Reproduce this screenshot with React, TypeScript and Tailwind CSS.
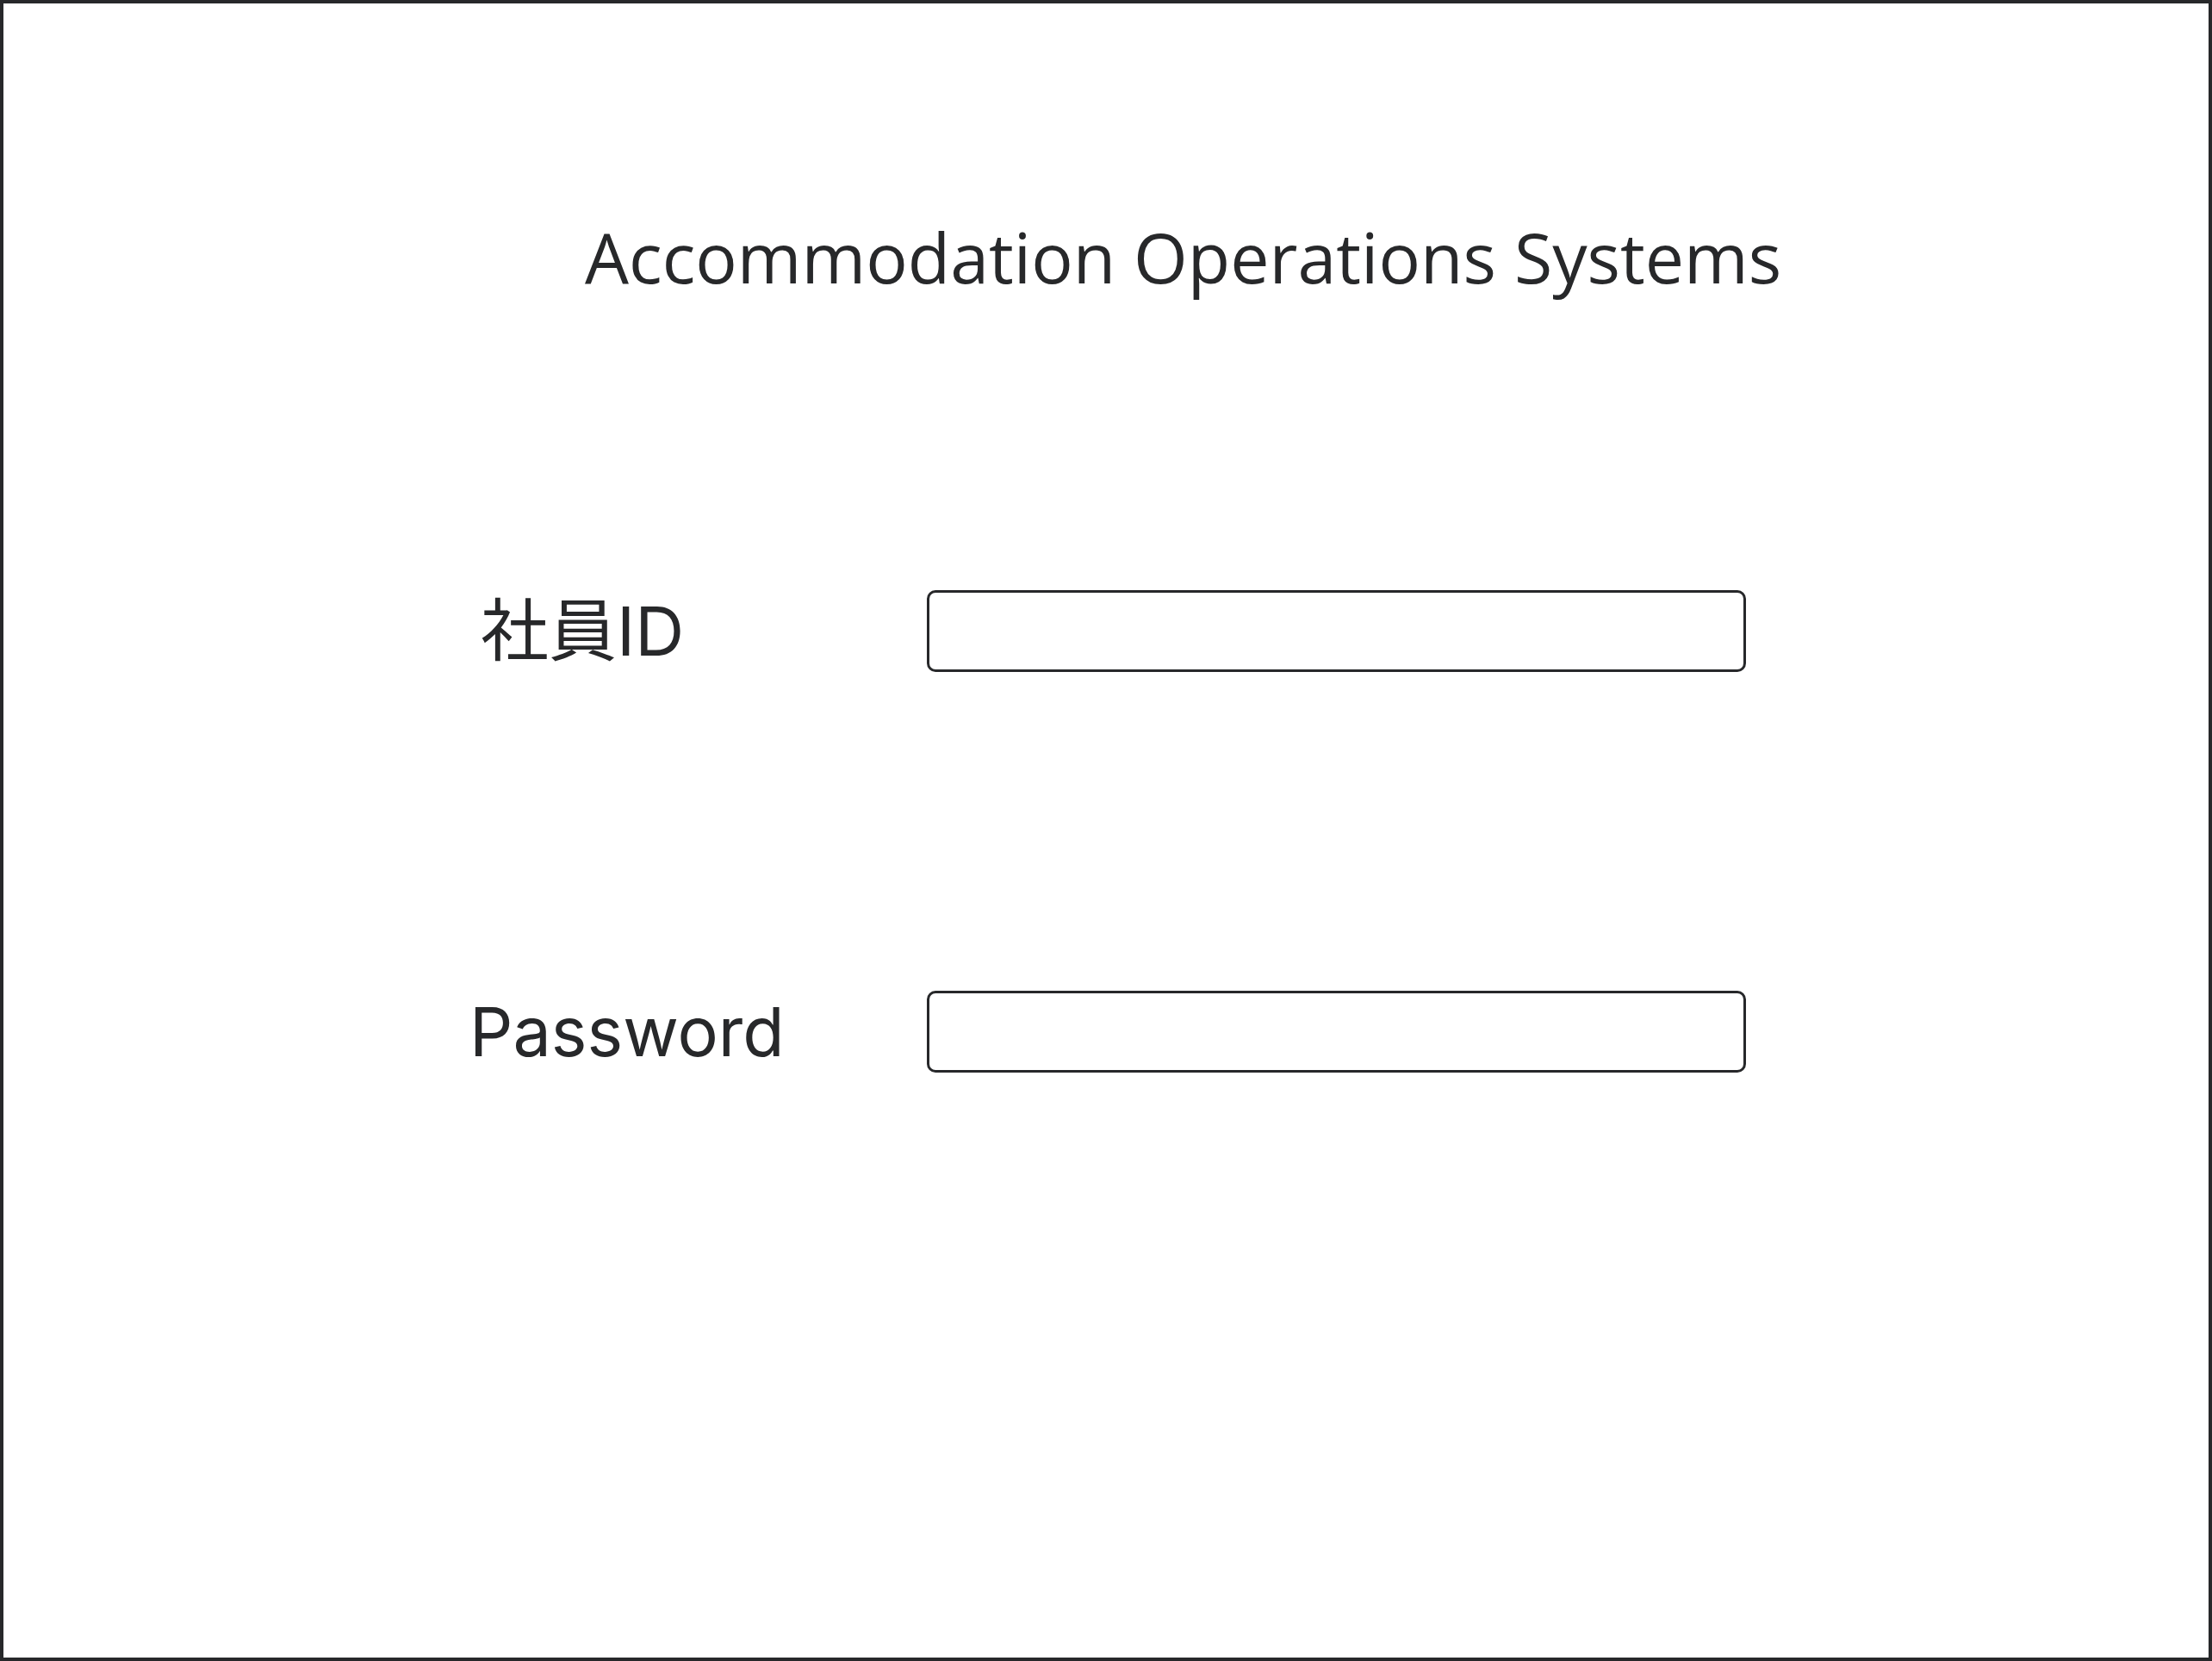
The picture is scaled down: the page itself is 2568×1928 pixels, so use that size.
const ink = 'text-[#27282a]';

const Field = ({ label, type, labelClass }: { label: string; type: string; labelClass: string }) => (
  <div className="flex h-[95px] items-center">
    <label className={`w-[1072px] shrink-0 text-[79px] leading-none ${ink} ${labelClass}`}>{label}</label>
    <input
      type={type}
      className="h-[95px] w-[951px] rounded-[10px] border-[3px] border-[#27282a] bg-white px-4 outline-none"
    />
  </div>
);

export default function App() {
  return (
    <div className="flex h-[1928px] w-full flex-col border-4 border-[#27282a] bg-white">
      <h1
        className={`mt-[254px] pl-[675px] text-[80.7px] leading-none font-normal ${ink}`}
        style={{ fontFamily: '"Open Sans", "Liberation Sans", sans-serif' }}
      >
        Accommodation Operations Systems
      </h1>
      <div
        className="mt-[346px] flex flex-col gap-[370px]"
        style={{ fontFamily: 'Inter, "Noto Sans CJK JP", sans-serif' }}
      >
        <Field label="社員ID" type="text" labelClass="pl-[554px]" />
        <Field label="Password" type="password" labelClass="pl-[541px]" />
      </div>
    </div>
  );
}
